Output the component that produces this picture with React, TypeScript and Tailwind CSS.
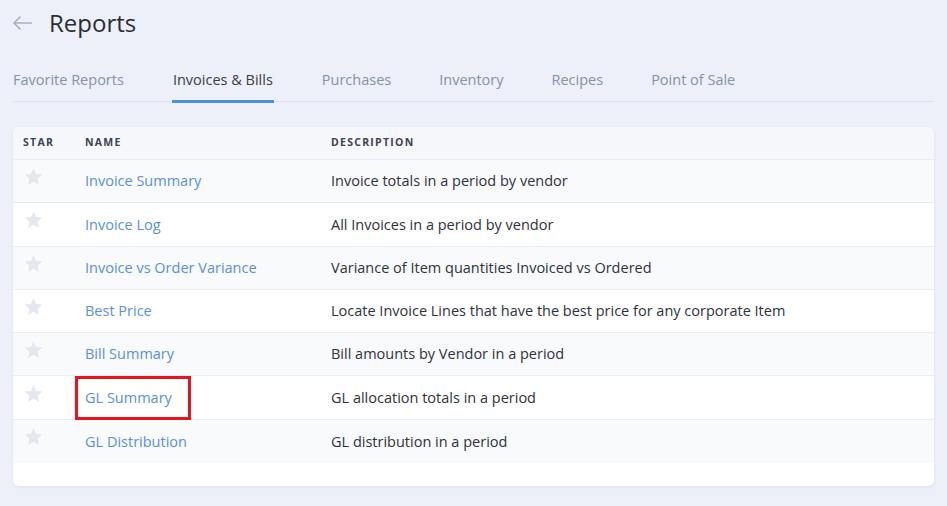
import React from "react";

const rows = [
  { name: "Invoice Summary", desc: "Invoice totals in a period by vendor" },
  { name: "Invoice Log", desc: "All Invoices in a period by vendor" },
  { name: "Invoice vs Order Variance", desc: "Variance of Item quantities Invoiced vs Ordered" },
  { name: "Best Price", desc: "Locate Invoice Lines that have the best price for any corporate Item" },
  { name: "Bill Summary", desc: "Bill amounts by Vendor in a period" },
  { name: "GL Summary", desc: "GL allocation totals in a period", boxed: true },
  { name: "GL Distribution", desc: "GL distribution in a period" },
];

const tabs = ["Favorite Reports", "Invoices & Bills", "Purchases", "Inventory", "Recipes", "Point of Sale"];

function Star() {
  return (
    <svg width="21" height="20" viewBox="0 0 24 24" className="block">
      <path
        d="M12 1.5l3.1 6.9 7.4.7-5.6 5 1.7 7.4L12 17.6l-6.6 3.9 1.7-7.4-5.6-5 7.4-.7z"
        fill="#e3e7ee"
      />
    </svg>
  );
}

export default function App() {
  return (
    <div
      className="w-[947px] h-[506px] bg-[#edf0f8] overflow-hidden"
      style={{ fontFamily: "'Open Sans', 'Noto Sans', sans-serif" }}
    >
      <div className="flex items-center h-[44px] pl-[12px] pt-[1px]">
        <svg width="21" height="16" viewBox="0 0 21 16" className="block">
          <path d="M20 8H2M8.5 1.5L2 8l6.5 6.5" stroke="#a8b0bf" strokeWidth="1.6" fill="none" />
        </svg>
        <div className="ml-[16px] text-[24px] leading-none text-[#2a2c36]">Reports</div>
      </div>

      <div className="mx-[13px] mt-[26px] flex gap-[48px] border-b border-[#dde2ec]">
        {tabs.map((t, i) => (
          <div
            key={t}
            className={
              i === 1
                ? "pb-[9px] text-[14.5px] leading-[20px] text-[#3a3d48] border-b-[3px] border-[#4a90e2] -mb-[2px] px-[1px]"
                : "pb-[11px] text-[14.5px] leading-[20px] text-[#8592a9]"
            }
          >
            {t}
          </div>
        ))}
      </div>

      <div className="mx-[13px] mt-[25px] bg-white rounded-[6px] shadow-[0_1px_3px_rgba(60,70,110,0.08)] overflow-hidden pb-[23px]">
        <div className="flex h-[33px] items-center bg-[#f5f7fb] border-b border-[#e8ecf3] text-[10.5px] font-bold tracking-[0.12em] text-[#3e4251]">
          <div className="w-[72px] pl-[10px]">STAR</div>
          <div className="w-[246px]">NAME</div>
          <div>DESCRIPTION</div>
        </div>
        {rows.map((r, i) => (
          <div
            key={r.name}
            className={
              "flex items-center h-[43.3px] border-b border-[#e8edf4] last:border-b-0 text-[14.5px] " +
              (i % 2 === 0 ? "bg-[#f9fafc]" : "bg-white")
            }
          >
            <div className="w-[72px] pl-[10px] -mt-[8px]">
              <Star />
            </div>
            <div className="w-[246px]">
              {r.boxed ? (
                <span className="inline-block -ml-[10px] pl-[7px] pr-[16px] py-[9px] border-[3px] border-[#e8141b] text-[#5b8fdc] leading-[20px]">
                  {r.name}
                </span>
              ) : (
                <span className="text-[#5b8fdc]">{r.name}</span>
              )}
            </div>
            <div className="text-[#2f323b]">{r.desc}</div>
          </div>
        ))}
      </div>
    </div>
  );
}
